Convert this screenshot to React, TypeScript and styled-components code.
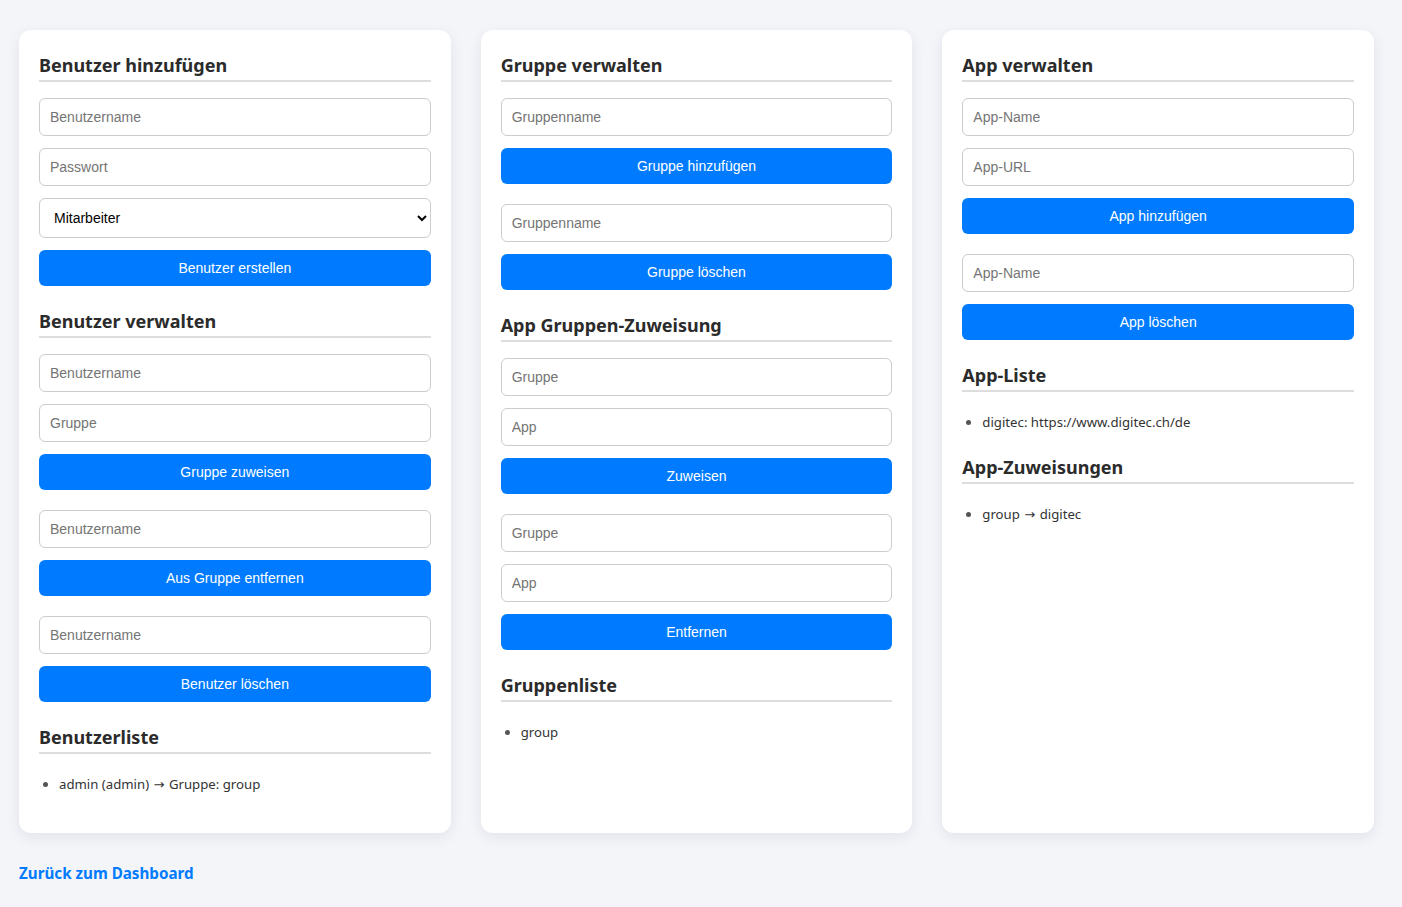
import React from "react";
import styled, { createGlobalStyle } from "styled-components";

const GlobalStyle = createGlobalStyle`
  html, body { margin: 0; padding: 0; background: #f4f5f9; }
  body { font-family: "Noto Sans", "Open Sans", sans-serif; color: #333; }
  * { box-sizing: border-box; }
`;

const Page = styled.div`
  padding: 30px 28px 20px 19px;
`;

const Columns = styled.div`
  display: grid;
  grid-template-columns: repeat(3, 1fr);
  gap: 30px;
`;

const Card = styled.section`
  background: #fff;
  border-radius: 12px;
  box-shadow: 0 4px 14px rgba(20, 30, 60, 0.08);
  padding: 20px 20px 18px;
`;

const Title = styled.h2`
  margin: 0 0 16px;
  padding: 2px 0 2px;
  border-bottom: 2px solid #dddddd;
  font-family: "Noto Sans", "Open Sans", sans-serif;
  font-size: 18px;
  line-height: 26px;
  font-weight: 700;
  color: #2b2b2b;
`;

const Form = styled.div`
  display: flex;
  flex-direction: column;
  gap: 12px;
  margin-bottom: 20px;
`;

const Field = styled.input`
  display: block;
  width: 100%;
  height: 38px;
  padding: 10px;
  border: 1px solid #cccccc;
  border-radius: 6px;
  font-family: "Liberation Sans", Arial, sans-serif;
  font-size: 14px;
  color: #222;
  background: #fff;
  &::placeholder { color: #757575; }
`;

const Select = styled.select`
  display: block;
  width: 100%;
  height: 40px;
  padding: 0 6px 0 10px;
  border: 1px solid #cccccc;
  border-radius: 6px;
  font-family: "Liberation Sans", Arial, sans-serif;
  font-size: 14px;
  color: #000;
  background: #fff;
`;

const Button = styled.button`
  display: block;
  width: 100%;
  height: 36px;
  border: none;
  border-radius: 6px;
  background: #007bff;
  color: #fff;
  font-family: "Liberation Sans", Arial, sans-serif;
  font-size: 14px;
  cursor: pointer;
`;

const List = styled.ul`
  margin: 0 0 16px;
  padding-left: 20px;
  color: #333;
  font-size: 13.2px;
`;

const Item = styled.li`
  padding: 4px 0;
  line-height: 20px;
  &::marker { color: #555; }
`;

const Arrow = styled.span`
  font-family: "DejaVu Sans", sans-serif;
  font-size: 13px;
  padding: 0 1px;
`;

const BackLink = styled.a`
  display: inline-block;
  margin-top: 30px;
  color: #007bff;
  font-weight: 700;
  font-size: 15.2px;
  line-height: 21px;
  text-decoration: none;
  font-family: "Noto Sans", "Open Sans", sans-serif;
`;

export default function App() {
  return (
    <>
      <GlobalStyle />
      <Page>
        <Columns>
          <Card>
            <Title>Benutzer hinzufügen</Title>
            <Form>
              <Field placeholder="Benutzername" />
              <Field type="password" placeholder="Passwort" />
              <Select defaultValue="Mitarbeiter">
                <option>Mitarbeiter</option>
                <option>Admin</option>
              </Select>
              <Button>Benutzer erstellen</Button>
            </Form>
            <Title>Benutzer verwalten</Title>
            <Form>
              <Field placeholder="Benutzername" />
              <Field placeholder="Gruppe" />
              <Button>Gruppe zuweisen</Button>
            </Form>
            <Form>
              <Field placeholder="Benutzername" />
              <Button>Aus Gruppe entfernen</Button>
            </Form>
            <Form>
              <Field placeholder="Benutzername" />
              <Button>Benutzer löschen</Button>
            </Form>
            <Title>Benutzerliste</Title>
            <List>
              <Item>admin (admin) <Arrow>→</Arrow> Gruppe: group</Item>
            </List>
          </Card>
          <Card>
            <Title>Gruppe verwalten</Title>
            <Form>
              <Field placeholder="Gruppenname" />
              <Button>Gruppe hinzufügen</Button>
            </Form>
            <Form>
              <Field placeholder="Gruppenname" />
              <Button>Gruppe löschen</Button>
            </Form>
            <Title>App Gruppen-Zuweisung</Title>
            <Form>
              <Field placeholder="Gruppe" />
              <Field placeholder="App" />
              <Button>Zuweisen</Button>
            </Form>
            <Form>
              <Field placeholder="Gruppe" />
              <Field placeholder="App" />
              <Button>Entfernen</Button>
            </Form>
            <Title>Gruppenliste</Title>
            <List>
              <Item>group</Item>
            </List>
          </Card>
          <Card>
            <Title>App verwalten</Title>
            <Form>
              <Field placeholder="App-Name" />
              <Field placeholder="App-URL" />
              <Button>App hinzufügen</Button>
            </Form>
            <Form>
              <Field placeholder="App-Name" />
              <Button>App löschen</Button>
            </Form>
            <Title>App-Liste</Title>
            <List>
              <Item>digitec: https://www.digitec.ch/de</Item>
            </List>
            <Title>App-Zuweisungen</Title>
            <List>
              <Item>group <Arrow>→</Arrow> digitec</Item>
            </List>
          </Card>
        </Columns>
        <BackLink href="#">Zurück zum Dashboard</BackLink>
      </Page>
    </>
  );
}
